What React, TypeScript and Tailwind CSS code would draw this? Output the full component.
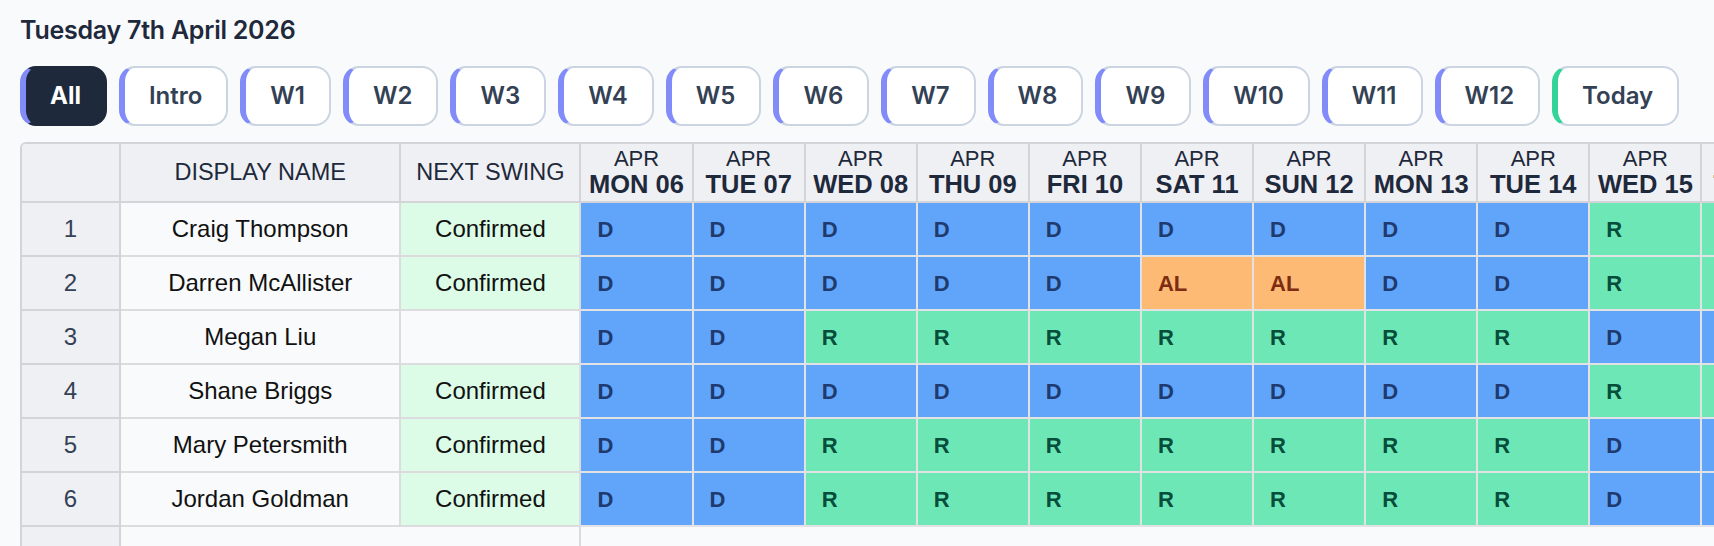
type Shift = "D" | "R" | "AL";

interface Person {
  id: number;
  name: string;
  nextSwing: string;
  shifts: Shift[];
}

const weekButtons = ["Intro", "W1", "W2", "W3", "W4", "W5", "W6", "W7", "W8", "W9", "W10", "W11", "W12"];

const dayNames = ["MON", "TUE", "WED", "THU", "FRI", "SAT", "SUN"];

// 14 days starting Monday 6th April
const days = Array.from({ length: 14 }, (_, i) => ({
  month: "APR",
  label: `${dayNames[i % 7]} ${String(6 + i).padStart(2, "0")}`,
}));

const people: Person[] = [
  {
    id: 1,
    name: "Craig Thompson",
    nextSwing: "Confirmed",
    shifts: ["D", "D", "D", "D", "D", "D", "D", "D", "D", "R", "R", "R", "R", "R"],
  },
  {
    id: 2,
    name: "Darren McAllister",
    nextSwing: "Confirmed",
    shifts: ["D", "D", "D", "D", "D", "AL", "AL", "D", "D", "R", "R", "R", "R", "R"],
  },
  {
    id: 3,
    name: "Megan Liu",
    nextSwing: "",
    shifts: ["D", "D", "R", "R", "R", "R", "R", "R", "R", "D", "D", "D", "D", "D"],
  },
  {
    id: 4,
    name: "Shane Briggs",
    nextSwing: "Confirmed",
    shifts: ["D", "D", "D", "D", "D", "D", "D", "D", "D", "R", "R", "R", "R", "R"],
  },
  {
    id: 5,
    name: "Mary Petersmith",
    nextSwing: "Confirmed",
    shifts: ["D", "D", "R", "R", "R", "R", "R", "R", "R", "D", "D", "D", "D", "D"],
  },
  {
    id: 6,
    name: "Jordan Goldman",
    nextSwing: "Confirmed",
    shifts: ["D", "D", "R", "R", "R", "R", "R", "R", "R", "D", "D", "D", "D", "D"],
  },
];

const shiftStyles: Record<Shift, string> = {
  D: "bg-[#60a5fa] text-[#1e3a6e]",
  R: "bg-[#6ee7b7] text-[#064e3b]",
  AL: "bg-[#fdba74] text-[#7c2d12]",
};

function FilterButton({
  label,
  active = false,
  accent = "indigo",
}: {
  label: string;
  active?: boolean;
  accent?: "indigo" | "emerald";
}) {
  const accentClass = accent === "emerald" ? "border-l-[#34d399]" : "border-l-[#818cf8]";
  return (
    <button
      className={`flex h-[60px] items-center rounded-[16px] border-2 border-l-[6px] px-6 text-[24px] ${accentClass} ${
        active
          ? "border-[#1e293b] bg-[#1e293b] font-bold text-white"
          : "border-[#cbd5e1] bg-white font-semibold text-[#334155]"
      }`}
    >
      {label}
    </button>
  );
}

export default function App() {
  return (
    <div className="min-h-screen overflow-hidden bg-[#f8fafc] pt-[17px] font-['Inter',sans-serif]">
      {/* Date heading */}
      <h1 className="pl-5 text-[25px] leading-[26px] font-semibold tracking-[-0.01em] text-[#1e293b]">
        Tuesday 7th April 2026
      </h1>

      {/* Week filters */}
      <div className="mt-[23px] flex gap-3 pl-5">
        <FilterButton label="All" active />
        {weekButtons.map((w) => (
          <FilterButton key={w} label={w} />
        ))}
        <FilterButton label="Today" accent="emerald" />
      </div>

      {/* Roster grid */}
      <div className="mt-[16px] ml-5 overflow-hidden rounded-tl-[6px] border-t-2 border-l-2 border-[#d4d4d8] font-['Liberation_Sans',Arial,sans-serif]">
        <table className="w-[2129px] table-fixed border-separate border-spacing-0">
          <thead>
            <tr className="bg-[#eff0f4] text-[#1e293b]">
              <th className="h-[59px] w-[99px] border-r-2 border-b-2 border-[#d4d4d8]" />
              <th className="w-[280px] border-r-2 border-b-2 border-[#d4d4d8] text-[23.5px] font-normal">
                DISPLAY NAME
              </th>
              <th className="w-[180px] border-r-2 border-b-2 border-[#d4d4d8] text-[23.5px] font-normal">
                NEXT SWING
              </th>
              {days.map((d) => (
                <th
                  key={d.label}
                  className="w-[112px] border-r-2 border-b-2 border-[#d4d4d8] pt-[3px] align-top"
                >
                  <div className="text-[22px] leading-[24px] font-normal">{d.month}</div>
                  <div className="text-[25.5px] leading-[27px] font-bold whitespace-nowrap">{d.label}</div>
                </th>
              ))}
            </tr>
          </thead>
          <tbody>
            {people.map((p) => (
              <tr key={p.id} className="text-[24px]">
                <td className="h-[54px] border-r-2 border-b-2 border-[#d4d4d8] bg-[#eff0f4] text-center text-[#334155]">
                  {p.id}
                </td>
                <td className="border-r-2 border-b-2 border-[#dcdcdf] bg-[#f8fafc] text-center text-[#111]">
                  {p.name}
                </td>
                <td
                  className={`border-r-2 border-b-2 border-[#dcdcdf] text-center text-[#111] ${
                    p.nextSwing ? "bg-[#dcfce7]" : "bg-[#f8fafc]"
                  }`}
                >
                  {p.nextSwing}
                </td>
                {p.shifts.map((s, i) => (
                  <td
                    key={i}
                    className={`border-r-2 border-b-2 border-[#e2e2e4] pl-4 text-[22px] font-bold ${shiftStyles[s]}`}
                  >
                    {s}
                  </td>
                ))}
              </tr>
            ))}
            <tr>
              <td className="h-[52px] border-r-2 border-[#d4d4d8] bg-[#eff0f4]" />
              <td colSpan={2} className="border-r-2 border-[#dcdcdf] bg-[#f8fafc]" />
              <td colSpan={days.length} className="bg-[#f8fafc]" />
            </tr>
          </tbody>
        </table>
      </div>
    </div>
  );
}
